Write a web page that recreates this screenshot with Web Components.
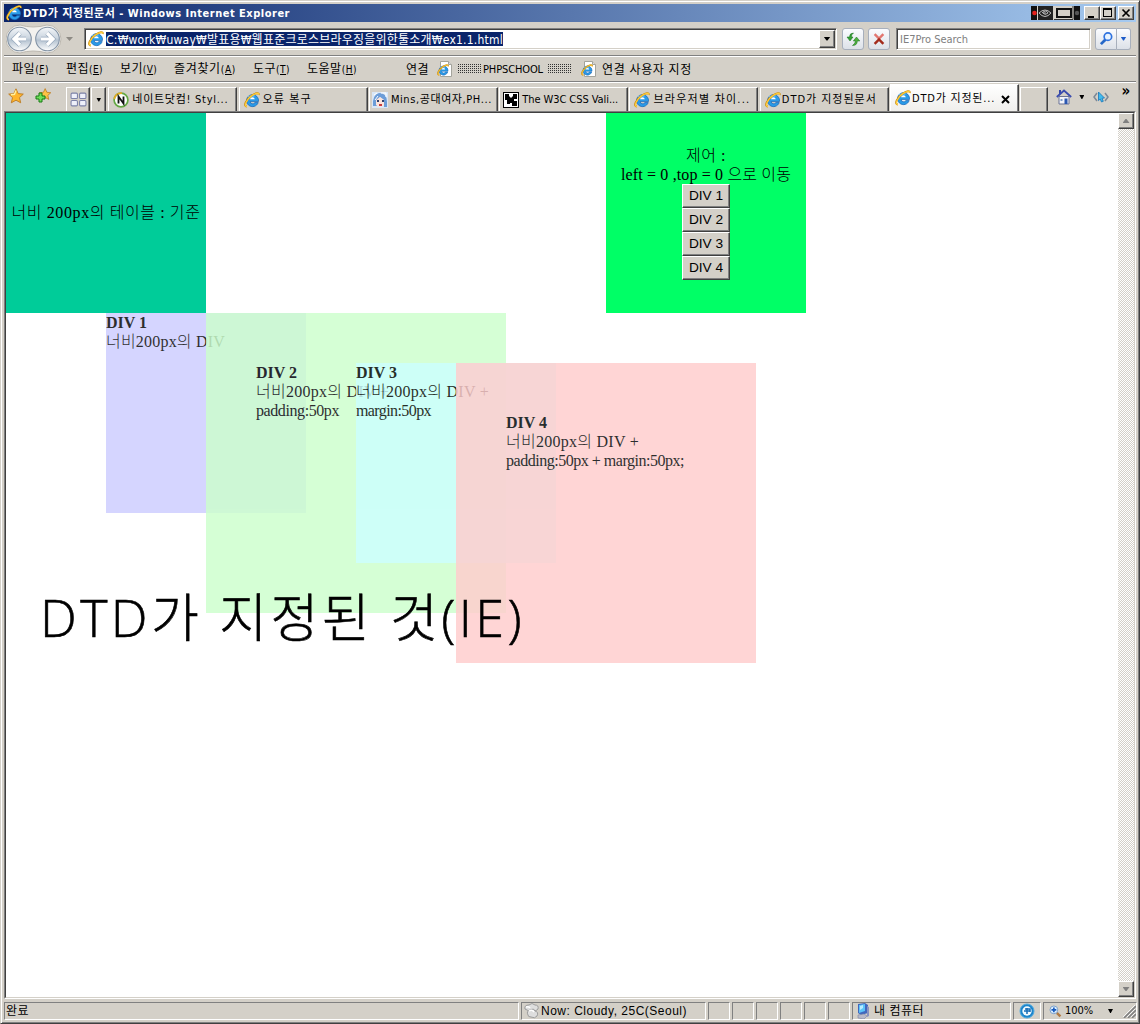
<!DOCTYPE html>
<html lang="ko">
<head>
<meta charset="utf-8">
<title>DTD가 지정된문서</title>
<style>
html,body{margin:0;padding:0;overflow:hidden;background:#d4d0c8}
body{font:12px/14px "DejaVu Sans Condensed","Noto Sans CJK KR",sans-serif;color:#000}
</style>
</head>
<body>
<browser-window></browser-window>
<script>
const make = (name, html, after) => customElements.define(name, class extends HTMLElement {
  connectedCallback() {
    if (this.shadowRoot) return;
    const r = this.attachShadow({mode: 'open'});
    r.innerHTML = typeof html === 'function' ? html(this) : html;
    if (after) after(this, r);
  }
});

/* One line of text spaced out to an exact width */
make('fit-text', el => `<style>:host{display:block;flex:none;white-space:pre;width:${el.getAttribute('w')}px}span{display:inline-block;white-space:pre}</style><span><slot></slot></span>`,
  (el, r) => {
    const s = r.querySelector('span'), w = +el.getAttribute('w');
    s.style.letterSpacing = (w - s.getBoundingClientRect().width) / [...el.textContent].length + 'px';
  });

const ie = `<path d="M14.400 9.600H6a2.700 2.700 0 0 0 4.900 1h3.300A6 6 0 1 1 14.500 8z" fill="#2a9be8" stroke="#1563b4" stroke-width=".7"/><path d="M6 7.200h4.800a2.450 2.450 0 0 0-4.800 0z" fill="#fff"/><path d="M4.200 5.200Q7 2.800 10.500 4" stroke="#8fdcff" fill="none" stroke-width="1.200"/><path d="M3 14.600C-1.200 14.500 2 7.200 8.200 3.200 11.500 1 15.300.2 14.700 3" fill="none" stroke="#c98a10" stroke-width="1.900"/><path d="M3 14.600C-.6 14.400 2.200 7.400 8.400 3.300 11.500 1.200 15 .5 14.600 2.800" fill="none" stroke="#ffce3a" stroke-width="1.200"/>`;
const icons = {
  ie,
  iepage: `<path d="M3.5.5h8l3 3v12h-11z" fill="#fff" stroke="#a4a49c"/><path d="M11.5.5v3h3" fill="#ddd" stroke="#a4a49c"/><g transform="translate(0 3) scale(.76)">${ie}</g>`,
  star: `<path d="M8 .8l2.200 4.800 5.100.5-3.800 3.500 1.200 5.200L8 12.200l-4.700 2.600 1.200-5.200L.7 6.100l5.100-.5z" fill="#ffb52c" stroke="#bb7a22" stroke-width=".9"/><path d="M8 2.600L6.500 6.300 3 6.800" stroke="#fff1a0" fill="none" stroke-width="1.400"/>`,
  addstar: `<g transform="translate(4 0) scale(.77)"><path d="M8 .8l2.200 4.800 5.100.5-3.800 3.500 1.200 5.200L8 12.200l-4.700 2.600 1.200-5.200L.7 6.100l5.100-.5z" fill="#ffc246" stroke="#bb7a22"/></g><path d="M4 5h3v3h3v3H7v3H4v-3H1V8h3z" fill="#6ede5a" stroke="#167b14"/>`,
  grid: `<g fill="#eef0fa" stroke="#7c82a8"><rect x="1" y="2" width="6" height="5" rx="1"/><rect x="9" y="2" width="6" height="5" rx="1"/><rect x="1" y="9" width="6" height="5" rx="1"/><rect x="9" y="9" width="6" height="5" rx="1"/></g>`,
  nate: `<circle cx="8" cy="8" r="6.900" fill="#fff" stroke="#64a844" stroke-width="1.700"/><path d="M1.200 7A7 7 0 0 1 9 1.100" fill="none" stroke="#e3ab24" stroke-width="1.700"/><path d="M5.500 11.500v-7l5 7v-7" fill="none" stroke="#111" stroke-width="1.800"/>`,
  mins: `<rect width="16" height="16" fill="#d9e7f7"/><path d="M1 14Q0 3 7 1q8 0 8 9v5h-3V8L8 5 5 9v5z" fill="#6c9dd8"/><path d="M4 8l4-3 4 3v5q-4 4-8 0z" fill="#fbe4db"/><path d="M5 8h2v2H5zm5 0h2v2h-2z" fill="#31416c"/><path d="M7 12h3v2H7z" fill="#c63a3c"/><path d="M9 1h5v4M2 3l3-2M3 8l3-4" fill="none" stroke="#fff"/>`,
  w3c: `<rect x=".5" y=".5" width="15" height="15" fill="#fff" stroke="#000"/><path d="M2 2h4v2l2 2 2-2V2h4v5h-3v2h3v5H9v-3H7v1H4V8H2z"/>`,
  refresh: `<path d="M8.500 2Q4.500 2 4.500 6H2l3 4 3-4H6.300Q6.200 3.600 8.500 2z" fill="#35a135" stroke="#176e1a" stroke-width=".5"/><path d="M7.500 14.500Q12.300 14.500 12.300 10H14.800L11.500 6 8.300 10h2.200Q10.300 12.700 7.500 14.500z" fill="#4fb03f" stroke="#176e1a" stroke-width=".5"/>`,
  stop: `<path d="M3 2.500l5 5L13 2.500" fill="none" stroke="#e27670" stroke-width="2.800"/><path d="M3 13.500l5-5 5 5" fill="none" stroke="#a32b1c" stroke-width="2.800"/>`,
  search: `<path d="M7 9l-5 5" stroke="#2467c8" stroke-width="3"/><circle cx="9.500" cy="6" r="4" fill="#e7f3ff" stroke="#2e72df" stroke-width="1.800"/>`,
  home: `<path d="M3 1h2v4H3z" fill="#3346a8"/><path d="M3 7.500h10V15H3z" fill="#f3f4fa" stroke="#6a7396"/><path d="M.8 8L8 1.500 15.200 8" fill="none" stroke="#3a4cae" stroke-width="1.800"/><path d="M8.500 9.500h3V15h-3z" fill="#2b57b0"/><path d="M4.500 10h2v2h-2z" fill="#7b9ccc"/>`,
  dev: `<path d="M4 4L1 8l3 4M12 4l3 4-3 4" fill="none" stroke="#7d8896" stroke-width="1.500"/><path d="M5.500 3l6 6-2.500.3 1.300 3-1.800.7-1.300-3-1.700 1.600z" fill="#40bbed" stroke="#1875b8" stroke-width=".8"/>`,
  cloud: `<g fill="#dedede" stroke="#9c9c9c"><path d="M2 6q-1-4 4-4 3-3 6 0 4 0 3 4-2 3-5 1-5 2-8-1z"/><path d="M5 12q-2-4 2-5 4-2 5 1 4 1 2 5-2 3-6 1-3 0-3-2z"/></g><path d="M6 8q3-2 5 1M3 4q3-1 4 1" stroke="#fff" fill="none" stroke-width="1.500"/>`,
  pc: `<path d="M3 1l7-1 3 2v8l-7 2-3-2z" fill="#4167bd"/><path d="M4 2l6-1v7l-6 2z" fill="#5cc4fa"/><path d="M5 3l3-1v3L5 7z" fill="#b8edff"/><path d="M3 12l6-1 3 2-3 3-6-1z" fill="#b9bac9" stroke="#7983a5" stroke-width=".6"/><path d="M12 3l2 1v9l-2 1z" fill="#8a93c0"/>`,
  globe: `<circle cx="8" cy="8" r="7" fill="#1c84ca" stroke="#4eaae0"/><circle cx="8" cy="8" r="4.700" fill="#f0faff"/><path d="M5 8h6M8 5v6M6 6h5v3" fill="none" stroke="#176db6" stroke-width="1.500"/>`,
  zoom: `<path d="M9 9l5 5" stroke="#b07a44" stroke-width="3"/><circle cx="6" cy="6" r="4.800" fill="#dcefff" stroke="#7c9fc9" stroke-width="1.200"/><path d="M6 3v6M3 6h6" stroke="#1659bd" stroke-width="2"/>`
};
make('ui-icon', el => `<style>:host{display:block;flex:none;width:${el.getAttribute('s')||16}px;height:${el.getAttribute('s')||16}px}svg{display:block;width:100%;height:100%}</style><svg viewBox="0 0 16 16">${icons[el.getAttribute('n')]}</svg>`);
make('down-arrow', el => `<style>:host{display:block;flex:none;width:${el.getAttribute('w')||7}px;height:4px;background:${el.getAttribute('c')||'#000'};clip-path:polygon(0 0,100% 0,57% 100%,43% 100%)}:host([up]){transform:scaleY(-1)}</style>`);

make('title-bar', `<style>
:host{display:flex;align-items:center;height:18px;background:linear-gradient(90deg,#0a246a,#a6caf0);color:#fff;font-size:11px;font-weight:700;padding:0 2px;box-sizing:border-box}
.gap{flex:1}.b{box-sizing:border-box;height:14px;background:#d4d0c8;border:1px solid;border-color:#fff #404040 #404040 #fff;box-shadow:inset -1px -1px #808080}
svg{display:block}
</style><ui-icon n="ie"></ui-icon><fit-text w="267" style="margin-left:1px;padding-top:1px">DTD가 지정된문서 - Windows Internet Explorer</fit-text><div class="gap"></div>
<svg width="49" height="14"><rect width="49" height="14" fill="#d4d0c8"/><rect width="6" height="14" fill="#111"/><circle cx="3.500" cy="7" r="2.300" fill="#e5201c"/><rect x="7" width="15" height="14" fill="#222"/><path d="M8 7q6-6 12 0-6 7-12 0zM11 7q4-4 6 0-3 3-5 0h3" fill="none" stroke="#bbb"/><rect x="26" y="3" width="14" height="8" fill="#d4d0c8" stroke="#111" stroke-width="2"/><path d="M23 13.500h19V0" fill="none" stroke="#333"/><rect x="43" width="6" height="14" fill="#111"/><circle cx="46" cy="7" r="2.200" fill="#555"/></svg>
<div class="b" style="width:16px;margin-left:4px"><svg width="14" height="12"><path d="M3 9h6v2H3z"/></svg></div>
<div class="b" style="width:16px"><svg width="14" height="12"><path d="M2 1h9v9H2zm1 2v6h7V3z" fill-rule="evenodd"/></svg></div>
<div class="b" style="width:16px;margin-left:2px"><svg width="14" height="12"><path d="M3.500 2.500l7 7m0-7l-7 7" stroke="#000" stroke-width="1.700"/></svg></div>`);

make('address-row', `<style>
:host{display:flex;align-items:center;height:34px;box-sizing:border-box;padding-left:2px;border-bottom:1px solid #808080}
.nav{display:block;margin-right:4px}
.field{display:flex;align-items:center;box-sizing:border-box;height:22px;background:#fff;border:1px solid;border-color:#808080 #fff #fff #808080;box-shadow:inset 1px 1px #404040,inset -1px -1px #d4d0c8}
.sel{background:#0a246a;color:#fff;height:14px;line-height:16px;margin-left:2px}
.drop{margin-left:auto;margin-right:1px;width:16px;height:18px;box-sizing:border-box;display:flex;align-items:center;justify-content:center;background:#d4d0c8;border:1px solid;border-color:#fff #404040 #404040 #fff;box-shadow:inset -1px -1px #808080}
.btn{display:flex;align-items:center;justify-content:center;box-sizing:border-box;width:22px;height:22px;border:1px solid #a7afbc;border-radius:3px;background:linear-gradient(#fbfcff,#dde1e8)}
</style>
<svg class="nav" width="74" height="30" viewBox="0 0 74 30"><defs><linearGradient id="g" x2="0" y2="1"><stop stop-color="#f4f7fa"/><stop offset=".45" stop-color="#ccd6e0"/><stop offset=".55" stop-color="#b4c2d0"/><stop offset="1" stop-color="#fff"/></linearGradient></defs>
<path d="M14 1Q27 5 41 1A14 14 0 0 1 41 29Q27 25 14 29A14 14 0 0 1 14 1z" fill="#f3f2ef" stroke="#bcb8b0"/><g fill="url(#g)" stroke="#8494a6" stroke-width="1.100"><circle cx="13.500" cy="15" r="11.800"/><circle cx="41.500" cy="15" r="11.800"/></g><g fill="none" stroke="#98a9bd" stroke-width="4.600"><path d="M20 15H9m5-6l-6 6 6 6M35 15h11m-5-6l6 6-6 6"/></g><g fill="none" stroke="#fff" stroke-width="3.200"><path d="M20 15H9m5-6l-6 6 6 6M35 15h11m-5-6l6 6-6 6"/></g><path d="M60 13h7l-3.500 4z" fill="#8d8a84"/></svg>
<div class="field" style="width:753px;padding-left:3px;margin-left:0"><ui-icon n="ie"></ui-icon><fit-text class="sel" w="397">C:₩work₩uway₩발표용₩웹표준크로스브라우징을위한툴소개₩ex1.1.html</fit-text><div class="drop"><down-arrow></down-arrow></div></div>
<div class="btn" style="margin-left:5px"><ui-icon n="refresh"></ui-icon></div>
<div class="btn" style="margin-left:4px"><ui-icon n="stop" s="14"></ui-icon></div>
<div class="field" style="width:195px;margin-left:6px;padding-left:3px;color:#808080;font-size:11px"><fit-text w="68" style="padding-top:2px">IE7Pro Search</fit-text></div>
<div class="btn" style="margin-left:4px;border-radius:3px 0 0 3px"><ui-icon n="search" s="15"></ui-icon></div><div class="btn" style="width:14px;border-left:0;border-radius:0 3px 3px 0"><down-arrow w="6" c="#1d5cc9"></down-arrow></div>`);

make('menu-row', `<style>
:host{display:flex;align-items:center;height:26px;box-sizing:border-box;border-top:1px solid #fff;border-bottom:1px solid #808080;padding-left:8px}
fit-text{margin-right:17px;padding-top:1px}small{font-size:10px}
.dots{width:24px;height:10px;background:conic-gradient(#333 25%,transparent 0 50%,transparent 0) 0 0/2px 2px}
</style>
<fit-text w="37">파일<small>(<u>F</u>)</small></fit-text><fit-text w="37">편집<small>(<u>E</u>)</small></fit-text><fit-text w="37">보기<small>(<u>V</u>)</small></fit-text><fit-text w="62">즐겨찾기<small>(<u>A</u>)</small></fit-text><fit-text w="37">도구<small>(<u>T</u>)</small></fit-text><fit-text w="50">도움말<small>(<u>H</u>)</small></fit-text>
<fit-text w="23" style="margin:0 8px 0 32px">연결</fit-text><ui-icon n="iepage"></ui-icon><div class="dots" style="margin:0 2px 0 4px"></div><fit-text w="60" style="margin:0 4px 0 0;font-size:11px">PHPSCHOOL</fit-text><div class="dots"></div><ui-icon n="iepage" style="margin:0 4px 0 10px"></ui-icon><fit-text w="90" style="margin-left:1px">연결 사용자 지정</fit-text>`);

make('page-tab', `<style>
:host{display:flex;flex:none;align-items:center;box-sizing:border-box;width:129px;height:24px;padding-left:4px;gap:3px;background:#d4d0c8;border:1px solid #fff;border-right:1px solid #404040;border-bottom:0;box-shadow:inset -1px 0 #808080;font-size:11px}
:host([active]){height:27px;background:linear-gradient(#fff,#f0efec);}
:host([tool]){padding:0;justify-content:center}
</style><slot></slot>`);

make('tab-row', `<style>
:host{display:flex;align-items:flex-end;height:29px;box-sizing:border-box;border-top:1px solid #fff;padding-left:4px}
page-tab{margin-right:1.300px}
page-tab fit-text{padding-top:1px}
.ic{align-self:center}
.more{align-self:flex-start;font:700 15px/12px "DejaVu Sans Condensed",sans-serif;margin:2px 0 0 12px}
</style>
<ui-icon n="star" style="margin:0 11px 7px 0"></ui-icon><ui-icon n="addstar" style="margin:0 15px 7px 0"></ui-icon>
<page-tab tool style="width:24px"><ui-icon n="grid" s="17"></ui-icon></page-tab><page-tab tool style="width:15px;margin-right:2px"><down-arrow w="5"></down-arrow></page-tab>
<page-tab><ui-icon n="nate"></ui-icon><fit-text w="96">네이트닷컴! Styl...</fit-text></page-tab>
<page-tab><ui-icon n="ie"></ui-icon><fit-text w="49">오류 복구</fit-text></page-tab>
<page-tab style="padding-left:2px"><ui-icon n="mins"></ui-icon><fit-text w="101">Mins,공대여자,PH...</fit-text></page-tab>
<page-tab style="padding-left:3px"><ui-icon n="w3c"></ui-icon><fit-text w="96">The W3C CSS Vali...</fit-text></page-tab>
<page-tab><ui-icon n="ie"></ui-icon><fit-text w="97">브라우저별 차이...</fit-text></page-tab>
<page-tab style="gap:1px"><ui-icon n="ie"></ui-icon><fit-text w="95">DTD가 지정된문서</fit-text></page-tab>
<page-tab active style="gap:1px"><ui-icon n="ie"></ui-icon><fit-text w="83">DTD가 지정된...</fit-text><svg width="9" height="9" style="margin:2px 0 0 5px"><path d="M1 1l7 7m0-7L1 8" stroke="#000" stroke-width="2"/></svg></page-tab>
<page-tab style="width:28px;margin-right:8px"></page-tab>
<ui-icon n="home" class="ic"></ui-icon><down-arrow w="5" class="ic" style="margin:0 9px 0 7px"></down-arrow><ui-icon n="dev" class="ic"></ui-icon><span class="more">»</span>`);

make('demo-box', `<style>
:host{display:block;position:absolute;box-sizing:border-box;opacity:.82;font:16px/19px "Liberation Serif","Noto Sans CJK KR",serif;font-weight:300}
</style><slot></slot>`);

make('page-view', `<style>
:host{display:block;position:relative;flex:1;background:#fff;overflow:hidden;font:16px/19px "Liberation Serif","Noto Sans CJK KR",serif}
.cell{position:absolute;top:0;width:200px;height:200px;display:flex;flex-direction:column;align-items:center;justify-content:center;box-sizing:border-box}
fit-text{height:19px;line-height:19px}
b{font-weight:700}
.cell fit-text{font-weight:300}
button{font:13.700px/15px "Liberation Sans",sans-serif;width:48px;height:24px;box-sizing:border-box;padding:0 0 2px;margin:0;background:#d4d0c8;color:#000;border:1px solid;border-color:#fff #404040 #404040 #fff;border-radius:0;box-shadow:inset -1px -1px #808080;display:block}
.big{position:absolute;left:34px;top:464px;font:300 52px/80px "Open Sans","Noto Sans CJK KR",sans-serif;-webkit-text-stroke:.6px #000}
.big fit-text{height:80px;line-height:80px}
</style>
<div class="cell" style="left:0;background:#00cc99;padding-bottom:2px"><fit-text w="189">너비 200px의 테이블 : 기준</fit-text></div>
<div class="cell" style="left:600px;background:#00ff66"><fit-text w="40">제어 :</fit-text><fit-text w="170">left = 0 ,top = 0 으로 이동</fit-text><button>DIV 1</button><button>DIV 2</button><button>DIV 3</button><button>DIV 4</button></div>
<demo-box style="left:100px;top:200px;width:200px;height:200px;background:#ccccff"><fit-text w="41"><b>DIV 1</b></fit-text><fit-text w="119">너비200px의 DIV</fit-text></demo-box>
<demo-box style="left:200px;top:200px;width:300px;height:300px;padding:50px;background:#ccffcc"><fit-text w="41"><b>DIV 2</b></fit-text><fit-text w="133">너비200px의 DIV +</fit-text><fit-text w="83">padding:50px</fit-text></demo-box>
<demo-box style="left:350px;top:250px;width:200px;height:200px;background:#ccffff"><fit-text w="41"><b>DIV 3</b></fit-text><fit-text w="133">너비200px의 DIV +</fit-text><fit-text w="75">margin:50px</fit-text></demo-box>
<demo-box style="left:450px;top:250px;width:300px;height:300px;padding:50px;background:#ffcccc"><fit-text w="41"><b>DIV 4</b></fit-text><fit-text w="133">너비200px의 DIV +</fit-text><fit-text w="178">padding:50px + margin:50px;</fit-text></demo-box>
<div class="big"><fit-text w="485">DTD가 지정된 것(IE)</fit-text></div>`);

make('scroll-bar', `<style>
:host{display:flex;flex-direction:column;justify-content:space-between;width:16px;background:repeating-conic-gradient(#fff 0 25%,#d4d0c8 0 50%) 0 0/2px 2px}
div{box-sizing:border-box;height:16px;display:flex;align-items:center;justify-content:center;background:#d4d0c8;border:1px solid;border-color:#fff #404040 #404040 #fff;box-shadow:inset -1px -1px #808080}
</style><div><down-arrow up c="#808080"></down-arrow></div><div><down-arrow c="#808080"></down-arrow></div>`);

make('status-bar', `<style>
:host{display:flex;height:18px;margin-top:3px;gap:2px}
div{box-sizing:border-box;height:18px;display:flex;align-items:center;border:1px solid;border-color:#808080 #fff #fff #808080;width:22px;flex:none}
svg{display:block;margin-left:auto}
</style>
<div style="width:515px;padding-left:1px"><fit-text w="23">완료</fit-text></div>
<div style="width:185px;padding-left:1px"><ui-icon n="cloud"></ui-icon><fit-text w="146" style="margin-left:2px;font-family:'Liberation Sans','Noto Sans CJK KR',sans-serif">Now: Cloudy, 25C(Seoul)</fit-text></div>
<div></div><div></div><div></div><div></div><div></div><div></div>
<div style="width:159px;padding-left:2px"><ui-icon n="pc"></ui-icon><fit-text w="50" style="margin-left:3px">내 컴퓨터</fit-text></div>
<div style="width:28px;justify-content:center"><ui-icon n="globe"></ui-icon></div>
<div style="width:94px;padding-left:5px"><ui-icon n="zoom" s="13"></ui-icon><fit-text w="28" style="margin:0 15px 0 3px;font-size:11px">100%</fit-text><down-arrow w="5"></down-arrow><svg width="13" height="13"><path d="M1 13L13 1M5 13l8-8M9 13l4-4" stroke="#808080" stroke-width="1.600"/><path d="M0 12L12 0M4 12l8-8M8 12l4-4" stroke="#fff" stroke-width=".8"/></svg></div>`);

make('browser-window', `<style>
:host{display:flex;flex-direction:column;box-sizing:border-box;width:1140px;height:1024px;background:#d4d0c8;border:1px solid;border-color:#d4d0c8 #404040 #404040 #d4d0c8;box-shadow:inset 1px 1px #fff,inset -1px -1px #808080;padding:3px 3px 2px}
.view{display:flex;height:888px;box-sizing:border-box;border:1px solid;border-color:#808080 #fff #fff #808080}
.in{display:flex;flex:1;border:1px solid;border-color:#404040 #d4d0c8 #d4d0c8 #404040}
</style><title-bar></title-bar><address-row></address-row><menu-row></menu-row><tab-row></tab-row>
<div class="view"><div class="in"><page-view></page-view><scroll-bar></scroll-bar></div></div><status-bar></status-bar>`);
</script>
</body>
</html>
